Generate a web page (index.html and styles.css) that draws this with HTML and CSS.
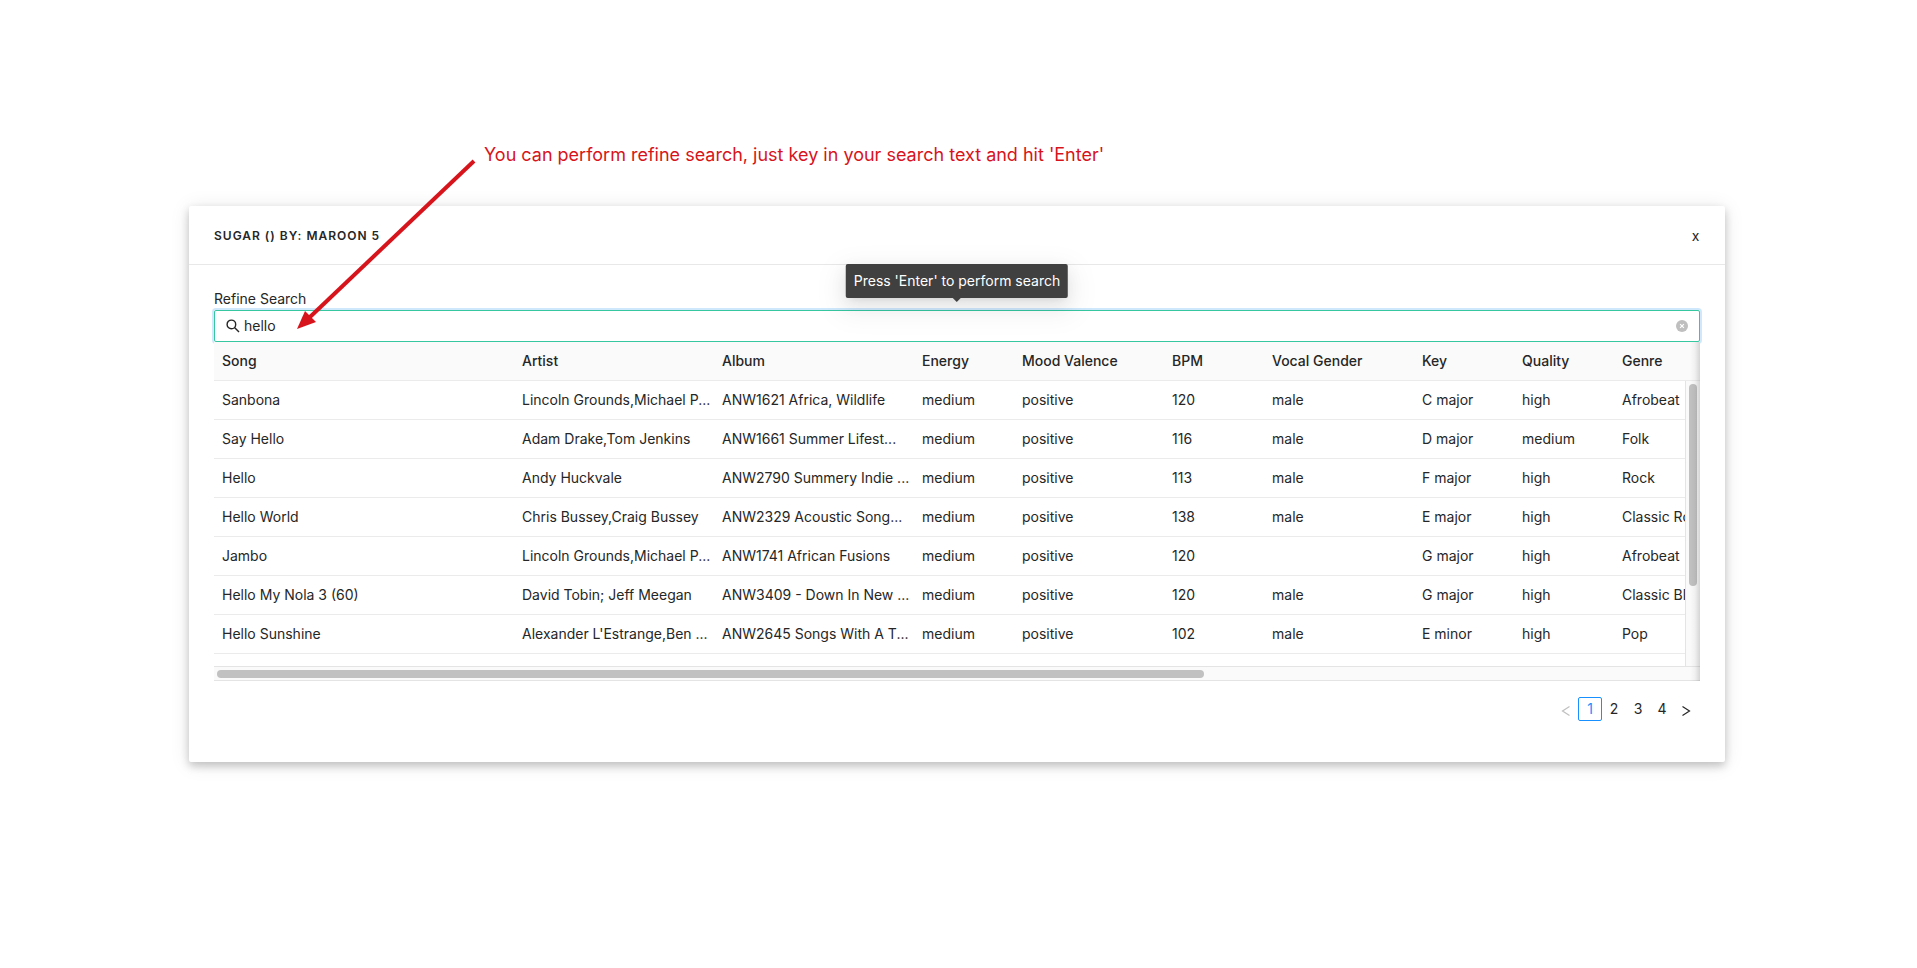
FILE: index.html
```html
<!DOCTYPE html>
<html lang="en">
<head>
<meta charset="utf-8">
<title>Refine Search</title>
<link rel="stylesheet" href="styles.css">
</head>
<body>
<main class="panel">
  <header class="panel-header">
    <h1 class="panel-title">Sugar () by: Maroon 5</h1>
    <button class="close" type="button" aria-label="Close">x</button>
  </header>
  <div class="panel-body">
    <label class="field-label" for="refine">Refine Search</label>
    <div class="search">
      <svg class="search-icon" viewBox="0 0 14 14" aria-hidden="true"><circle cx="5.4" cy="5.4" r="4.3"/><path d="M8.5 8.5 13 13"/></svg>
      <input class="search-input" id="refine" type="text" value="hello">
      <button class="clear" type="button" aria-label="Clear search"><svg viewBox="0 0 12 12"><circle cx="6" cy="6" r="6"/><path d="m4.1 4.1 3.8 3.8m0-3.8L4.1 7.9"/></svg></button>
      <div class="tooltip" role="tooltip">Press 'Enter' to perform search</div>
    </div>
    <div class="results">
      <div class="viewport">
        <table class="songs">
          <colgroup><col class="w300"><col class="w200"><col class="w200"><col class="w100"><col class="w150"><col class="w100"><col class="w150"><col class="w100"><col class="w100"><col class="w200"></colgroup>
          <thead><tr><th>Song</th><th>Artist</th><th>Album</th><th>Energy</th><th>Mood Valence</th><th>BPM</th><th>Vocal Gender</th><th>Key</th><th>Quality</th><th>Genre</th></tr></thead>
          <tbody>
            <tr><td>Sanbona</td><td>Lincoln Grounds,Michael P...</td><td>ANW1621 Africa, Wildlife</td><td>medium</td><td>positive</td><td>120</td><td>male</td><td>C major</td><td>high</td><td>Afrobeat</td></tr>
            <tr><td>Say Hello</td><td>Adam Drake,Tom Jenkins</td><td>ANW1661 Summer Lifest...</td><td>medium</td><td>positive</td><td>116</td><td>male</td><td>D major</td><td>medium</td><td>Folk</td></tr>
            <tr><td>Hello</td><td>Andy Huckvale</td><td>ANW2790 Summery Indie ...</td><td>medium</td><td>positive</td><td>113</td><td>male</td><td>F major</td><td>high</td><td>Rock</td></tr>
            <tr><td>Hello World</td><td>Chris Bussey,Craig Bussey</td><td>ANW2329 Acoustic Song...</td><td>medium</td><td>positive</td><td>138</td><td>male</td><td>E major</td><td>high</td><td>Classic Rock</td></tr>
            <tr><td>Jambo</td><td>Lincoln Grounds,Michael P...</td><td>ANW1741 African Fusions</td><td>medium</td><td>positive</td><td>120</td><td></td><td>G major</td><td>high</td><td>Afrobeat</td></tr>
            <tr><td>Hello My Nola 3 (60)</td><td>David Tobin; Jeff Meegan</td><td>ANW3409 - Down In New ...</td><td>medium</td><td>positive</td><td>120</td><td>male</td><td>G major</td><td>high</td><td>Classic Blues</td></tr>
            <tr><td>Hello Sunshine</td><td>Alexander L'Estrange,Ben ...</td><td>ANW2645 Songs With A T...</td><td>medium</td><td>positive</td><td>102</td><td>male</td><td>E minor</td><td>high</td><td>Pop</td></tr>
          </tbody>
        </table>
      </div>
      <div class="side"><div class="corner"></div><div class="vtrack"><div class="vthumb"></div></div></div>
      <div class="htrack"><div class="hthumb"></div></div>
      <div class="edge"></div>
    </div>
    <nav class="pages" aria-label="Pages">
      <button class="page" type="button" disabled aria-label="Previous page"><svg viewBox="0 0 12 12"><path d="M9.5 1.5 2.5 6l7 4.5"/></svg></button>
      <button class="page current" type="button" aria-current="page">1</button>
      <button class="page" type="button">2</button>
      <button class="page" type="button">3</button>
      <button class="page" type="button">4</button>
      <button class="page" type="button" aria-label="Next page"><svg viewBox="0 0 12 12"><path d="m2.5 1.5 7 4.5-7 4.5"/></svg></button>
    </nav>
  </div>
</main>
<p class="note">You can perform refine search, just key in your search text and hit 'Enter'</p>
<svg class="arrow" viewBox="0 0 180 172" aria-hidden="true"><path class="shaft" d="M178 5 14 161"/><path class="head" d="m1 173 8-18 11 11z"/></svg>
</body>
</html>
```
FILE: styles.css
```css
* { box-sizing: border-box; }
body {
  position: relative;
  margin: 0;
  padding: 206px 192px 40px 189px;
  background: #fff;
  color: #262626;
  font: 14px/22px Inter, "Liberation Sans", sans-serif;
}
button, input { font: inherit; color: inherit; }
button { padding: 0; border: 0; background: none; cursor: pointer; }

.panel {
  background: #fff;
  border-radius: 2px;
  box-shadow: 0 4px 8px rgba(0, 0, 0, .2), 0 2px 20px rgba(0, 0, 0, .1);
}
.panel-header {
  display: flex;
  align-items: center;
  justify-content: space-between;
  height: 59px;
  padding: 2px 25px 0;
  border-bottom: 1px solid #e8e8e8;
}
.panel-title {
  margin: 0;
  font-size: 12px;
  font-weight: 600;
  letter-spacing: 1px;
  text-transform: uppercase;
}
.close { width: 9px; }
.panel-body { padding: 23px 25px 41px; }
.field-label { display: block; }

.search {
  position: relative;
  display: flex;
  align-items: center;
  gap: 4px;
  height: 32px;
  padding: 0 11px;
  border: 1px solid #36c6a0;
  border-radius: 2px;
  box-shadow: 0 0 0 2px #cfe8fc;
}
.search-icon { width: 14px; height: 14px; fill: none; stroke: #262626; stroke-width: 1.4; }
.search-input { flex: 1; min-width: 0; padding: 0; border: 0; outline: 0; background: none; }
.clear { width: 12px; height: 12px; line-height: 0; }
.clear svg { width: 12px; height: 12px; fill: #bfbfbf; stroke: #fff; stroke-width: 1.2; }
.clear circle { stroke: none; }
.tooltip {
  position: absolute;
  bottom: 43px;
  left: 50%;
  transform: translateX(-50%);
  padding: 6px 8px;
  border-radius: 2px;
  background: #404040;
  color: #fff;
  white-space: nowrap;
  box-shadow: 0 3px 6px -4px rgba(0, 0, 0, .12), 0 6px 16px rgba(0, 0, 0, .08), 0 9px 28px 8px rgba(0, 0, 0, .05);
}
.tooltip::after {
  content: "";
  position: absolute;
  top: 100%;
  left: 50%;
  margin-left: -4px;
  border: 4px solid transparent;
  border-top-color: #404040;
  border-bottom: 0;
}

.results {
  position: relative;
  z-index: 1;
  display: grid;
  grid-template-columns: minmax(0, 1fr) 15px;
}
.viewport { height: 324px; overflow: hidden; }
.songs { width: 1600px; table-layout: fixed; border-collapse: separate; border-spacing: 0; }
.w100 { width: 100px; }
.w150 { width: 150px; }
.w200 { width: 200px; }
.w300 { width: 300px; }
.songs th, .songs td {
  height: 39px;
  padding: 8px;
  border-bottom: 1px solid #ebebeb;
  text-align: left;
  white-space: nowrap;
  overflow: hidden;
}
.songs th { background: #fafafa; font-weight: 500; }
.side { display: flex; flex-direction: column; background: #fafafa; }
.corner { height: 39px; border-bottom: 1px solid #ebebeb; }
.vtrack { flex: 1; padding: 3px; border-left: 1px solid #e4e4e4; }
.vthumb { width: 8px; height: 202px; border-radius: 4px; background: #c1c1c1; }
.htrack {
  grid-column: 1 / -1;
  height: 15px;
  padding: 3px;
  border-top: 1px solid #e4e4e4;
  border-bottom: 1px solid #e4e4e4;
  background: #fafafa;
}
.hthumb { width: calc(200% / 3); height: 8px; border-radius: 4px; background: #c1c1c1; }
.edge {
  position: absolute;
  inset: 0 0 0 auto;
  width: 10px;
  background: linear-gradient(to left, rgba(0, 0, 0, .15), rgba(0, 0, 0, .04) 50%, transparent);
}

.pages { display: flex; justify-content: flex-end; margin-top: 16px; padding-right: 2px; }
.page { width: 24px; height: 24px; border-radius: 2px; }
.page svg { width: 12px; height: 12px; fill: none; stroke: currentColor; stroke-width: 1.2; vertical-align: -3px; }
.page:disabled { color: #bfbfbf; }
.current { border: 1px solid #1890ff; color: #1890ff; }

.note {
  position: absolute;
  top: 141px;
  left: 484px;
  margin: 0;
  color: #d7141c;
  font-size: 18px;
  line-height: 28px;
  white-space: nowrap;
}
.arrow { position: absolute; z-index: 2; top: 156px; left: 296px; width: 180px; height: 172px; overflow: visible; }
.shaft { stroke: #d7141c; stroke-width: 4; }
.head { fill: #d7141c; }
```
